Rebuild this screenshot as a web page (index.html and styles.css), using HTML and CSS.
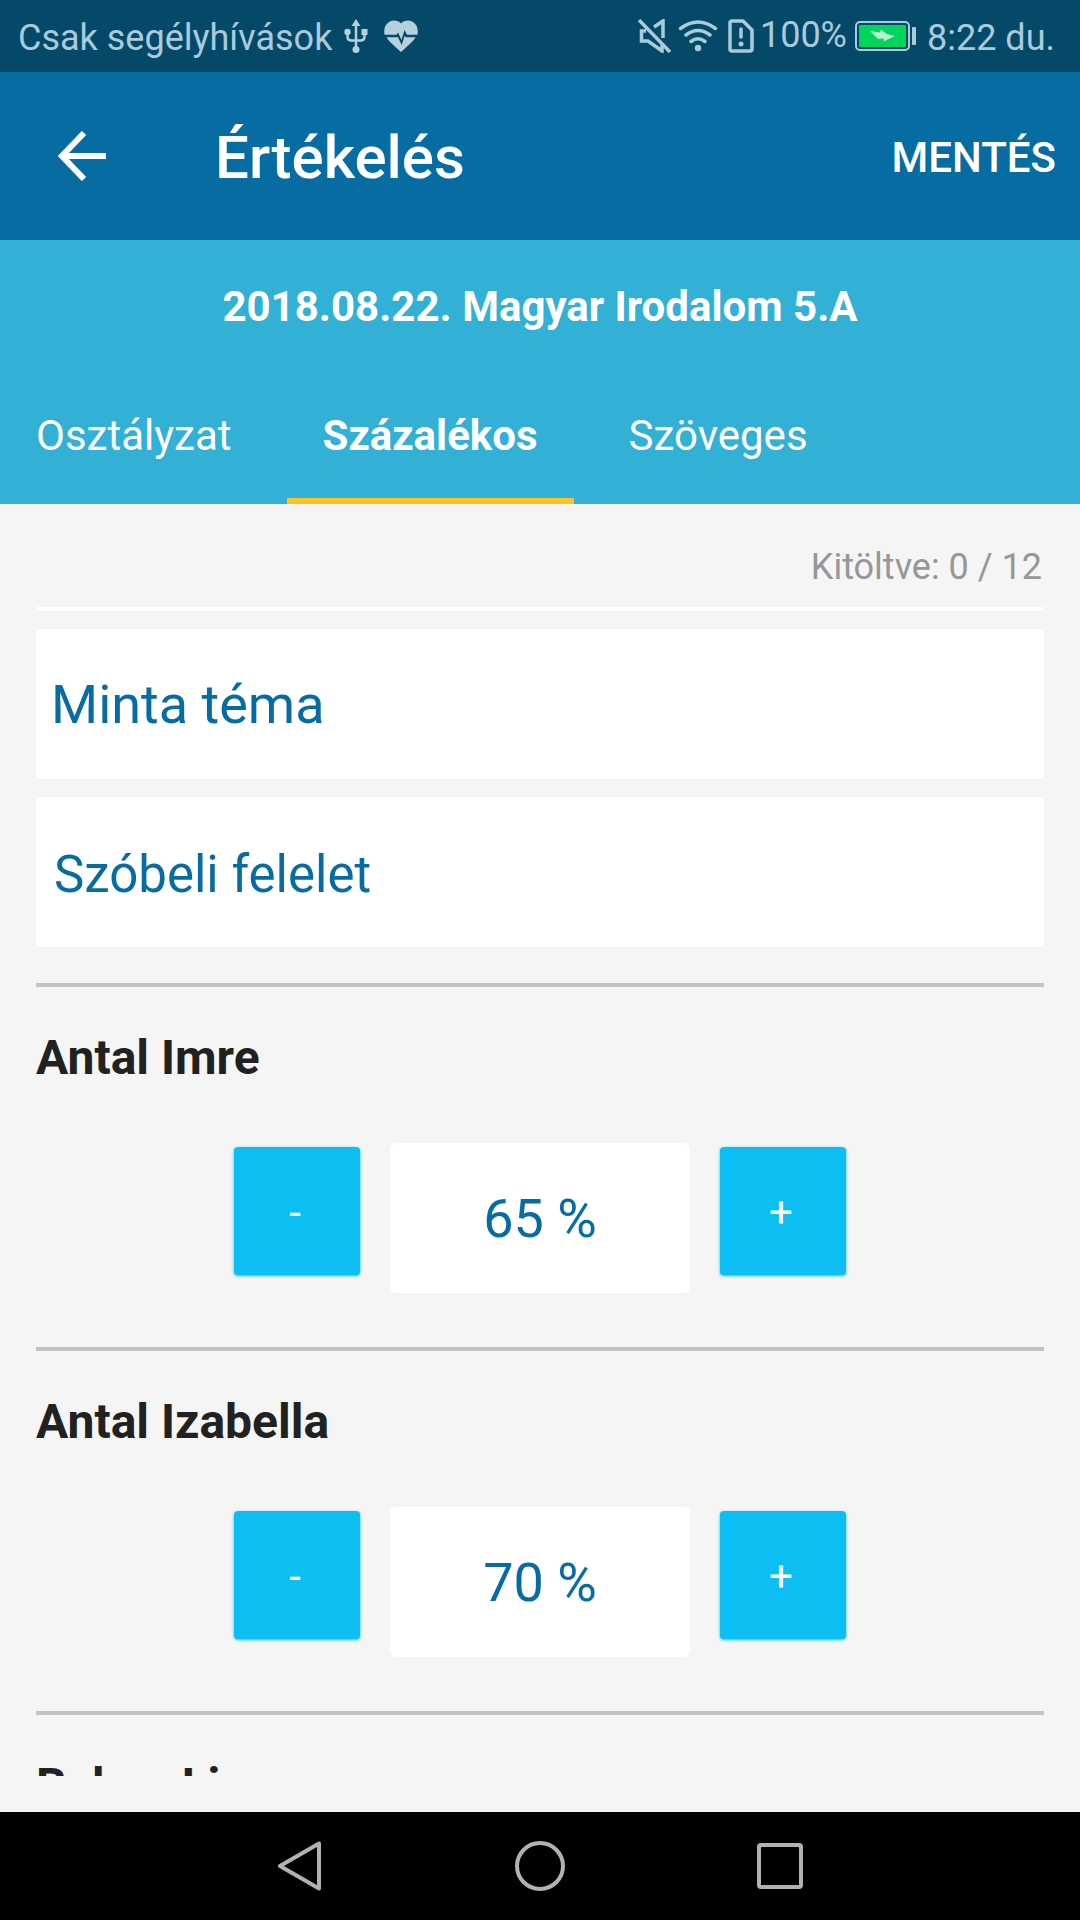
FILE: index.html
```html
<!DOCTYPE html>
<html lang="hu">
<head>
<meta charset="utf-8">
<meta name="viewport" content="width=device-width, initial-scale=1">
<title>Értékelés</title>
<link rel="stylesheet" href="styles.css">
</head>
<body>
<div class="app">
  <div class="status">
    <div class="status-left">
      <span class="carrier">Csak segélyhívások</span>
      <svg class="usb" width="24" height="34" viewBox="0 0 24 34" aria-hidden="true">
        <path d="M12 0l4.500 7h-9z" fill="currentColor"/>
        <path d="M12 5v24M3.500 13v4.500q0 4 4 4h9q4 0 4-4V13" fill="none" stroke="currentColor" stroke-width="2.500"/>
        <circle cx="3.500" cy="13" r="3.200" fill="currentColor"/>
        <rect x="17.500" y="10" width="6" height="6" fill="currentColor"/>
        <circle cx="12" cy="30.500" r="3.500" fill="currentColor"/>
      </svg>
      <svg class="heart" width="34" height="32" viewBox="0 0 34 32" aria-hidden="true">
        <path d="M17 3.500C14 0 9 0 5.500 1.700 1 4 -0.500 9 0.500 14.800H12.500l1.500-2.300 3.500 7.500L20.500 10l2.500 4.800h10.500C34.500 9 33 4 28.500 1.700 25 0 20 0 17 3.500z" fill="currentColor"/>
        <path d="M2.500 17.300C5 22 11 26.500 17 32c6-5.500 12-10 14.500-14.700H21.700l-1-1.800-3 9.500-3.900-8-.6.300z" fill="currentColor"/>
      </svg>
    </div>
    <div class="status-right">
      <svg width="34" height="34" viewBox="0 0 34 34" fill="none" stroke="currentColor" stroke-width="3.500" aria-hidden="true">
        <path d="M1 1l31 32M16 8l9-6v17M8 12H3.500v10H10l14 10V25"/>
      </svg>
      <svg class="wifi" width="40" height="32" viewBox="0 0 40 32" fill="none" stroke="currentColor" stroke-width="3.500" stroke-linecap="round" aria-hidden="true">
        <path d="M2.500 8.500q17.500-13 35 0M8 15q12-9 24 0M13 21.500q7-5.500 14 0"/>
        <circle cx="20" cy="28" r="3.200" fill="currentColor" stroke="none"/>
      </svg>
      <svg class="sim" width="26" height="34" viewBox="0 0 26 34" fill="none" stroke="currentColor" stroke-width="3.500" stroke-linejoin="round" aria-hidden="true">
        <path d="M4 2h11l9 9v19q0 2-2 2H4q-2 0-2-2V4q0-2 2-2z"/>
        <path d="M13 10v8" stroke-linecap="round"/>
        <circle cx="13" cy="25" r="2.500" fill="currentColor" stroke="none"/>
      </svg>
      <span class="charge">100%</span>
      <svg class="battery" width="62" height="30" viewBox="0 0 62 30" aria-hidden="true">
        <rect x="1" y="1" width="53" height="28" rx="4" fill="none" stroke="currentColor" stroke-width="2"/>
        <rect x="4" y="4" width="47" height="22" rx="1" fill="#00d45a"/>
        <path d="M15 10l10 1.500 1-3 6 4.500 8 2-11.500 5.500.5-3-6 .5z" fill="#b4f3cd"/>
        <rect x="57" y="6" width="4" height="18" rx="1" fill="currentColor"/>
      </svg>
      <span class="clock">8:22 du.</span>
    </div>
  </div>

  <header class="appbar">
    <button class="back" type="button" aria-label="Vissza">
      <svg width="50" height="50" viewBox="0 0 50 50" fill="none" stroke="currentColor" stroke-width="6" aria-hidden="true">
        <path d="M26 2L4 25 26 48M4 25h44"/>
      </svg>
    </button>
    <h1 class="title">Értékelés</h1>
    <button class="save" type="button">MENTÉS</button>
  </header>

  <section class="lesson">
    <h2 class="lesson-name">2018.08.22. Magyar Irodalom 5.A</h2>
    <nav class="tabs">
      <a class="tab" href="#osztalyzat">Osztályzat</a>
      <a class="tab tab-active" href="#szazalekos" aria-current="page">Százalékos</a>
      <a class="tab" href="#szoveges">Szöveges</a>
    </nav>
  </section>

  <main class="main">
    <p class="counter">Kitöltve: 0 / 12</p>
    <div class="scroller">
      <form class="form">
        <div class="fields">
          <input class="field" type="text" aria-label="Dátum">
          <input class="field" type="text" aria-label="Téma" value="Minta téma">
          <select class="field field-select" aria-label="Értékelés módja"><option>Szóbeli felelet</option></select>
        </div>
        <section class="student">
          <h3 class="student-name"><label for="s1">Antal Imre</label></h3>
          <div class="stepper">
            <button class="step" type="button" aria-label="Csökkentés">-</button>
            <input class="percent" id="s1" type="text" value="65 %">
            <button class="step" type="button" aria-label="Növelés">+</button>
          </div>
        </section>
        <section class="student">
          <h3 class="student-name"><label for="s2">Antal Izabella</label></h3>
          <div class="stepper">
            <button class="step" type="button" aria-label="Csökkentés">-</button>
            <input class="percent" id="s2" type="text" value="70 %">
            <button class="step" type="button" aria-label="Növelés">+</button>
          </div>
        </section>
        <section class="student">
          <h3 class="student-name">Bakos Lia</h3>
        </section>
      </form>
    </div>
  </main>

  <nav class="sysnav">
    <button type="button" aria-label="Vissza">
      <svg width="50" height="50" viewBox="0 0 50 50" fill="none" stroke="currentColor" stroke-width="4" stroke-linejoin="round" aria-hidden="true"><path d="M44 2.500v45L5 25z"/></svg>
    </button>
    <button type="button" aria-label="Kezdőképernyő">
      <svg width="50" height="50" viewBox="0 0 50 50" fill="none" stroke="currentColor" stroke-width="4" aria-hidden="true"><circle cx="25" cy="25" r="23"/></svg>
    </button>
    <button type="button" aria-label="Legutóbbiak">
      <svg width="50" height="50" viewBox="0 0 50 50" fill="none" stroke="currentColor" stroke-width="4" aria-hidden="true"><rect x="4" y="4" width="42" height="42" rx="2"/></svg>
    </button>
  </nav>
</div>
</body>
</html>
```
FILE: styles.css
```css
* {
  box-sizing: border-box;
}

body,
h1,
h2,
h3,
p {
  margin: 0;
}

body,
button,
input,
select {
  font-family: Roboto, sans-serif;
}

button {
  padding: 0;
  border: 0;
  background: none;
  color: inherit;
}

svg {
  display: block;
  flex: none;
}

.app {
  display: flex;
  flex-direction: column;
  height: 100vh;
  background: #f5f5f5;
  color: #212121;
}

/* System status bar */
.status {
  display: flex;
  justify-content: space-between;
  height: 72px;
  padding: 0 25px 0 18px;
  background: #044968;
  color: #abcadc;
  font-size: 36px;
  line-height: 48px;
}

.status-left,
.status-right {
  display: flex;
  align-items: center;
}

.carrier {
  padding-top: 4px;
}

.usb,
.heart {
  color: #b8d0dc;
}

.usb {
  margin-left: 12px;
}

.heart {
  margin-left: 16px;
}

.wifi {
  margin-left: 6px;
}

.sim {
  margin-left: 10px;
}

.charge {
  padding: 0 8px 2px 6px;
}

.clock {
  padding: 4px 0 0 10px;
}

/* App bar */
.appbar {
  display: flex;
  align-items: center;
  height: 168px;
  padding: 4px 24px 0 58px;
  background: #076ca1;
  color: #fff;
}

.back {
  margin-bottom: 4px;
}

.title {
  flex: 1;
  margin-left: 107px;
  font-size: 60px;
  font-weight: 500;
  line-height: 72px;
}

.save {
  font-size: 42px;
  font-weight: 500;
  line-height: 48px;
}

/* Lesson heading and tabs */
.lesson {
  padding-top: 43px;
  background: #33b0d5;
  color: #fff;
  font-size: 42px;
  line-height: 48px;
}

.lesson-name {
  margin-bottom: 38px;
  font-size: 42px;
  text-align: center;
}

.tabs {
  display: flex;
  gap: 19px;
}

.tab {
  padding: 43px 36px 38px;
  border-bottom: 6px solid transparent;
  color: inherit;
  text-decoration: none;
}

.tab-active {
  border-color: #ffc222;
  font-weight: 700;
}

/* Scrolling form */
.main {
  display: flex;
  flex: 1;
  flex-direction: column;
  min-height: 0;
  padding: 42px 36px 36px;
}

.counter {
  padding: 0 2px 19px 0;
  color: #979797;
  font-size: 36px;
  line-height: 42px;
  text-align: right;
}

.scroller {
  flex: 1;
  min-height: 0;
  overflow: hidden;
}

/* The list is scrolled so that only the foot of the first field shows */
.form {
  margin-top: -146px;
}

.fields {
  display: grid;
  gap: 18px;
  padding-bottom: 36px;
}

.field,
.percent {
  width: 100%;
  height: 150px;
  padding: 0 15px;
  border: 0;
  border-radius: 6px;
  background: #fff;
  color: #076ca1;
  font-size: 54px;
}

.field-select {
  padding: 4px 18px 0;
  appearance: none;
  font-size: 51px;
}

.student {
  padding: 43px 0 54px;
  border-top: 4px solid #c2c2c2;
}

.student-name {
  margin-bottom: 57px;
  font-size: 48px;
  line-height: 56px;
}

.stepper {
  display: flex;
  align-items: flex-start;
  justify-content: center;
  gap: 30px;
}

.percent {
  width: 300px;
  text-align: center;
}

.step {
  width: 126px;
  height: 128px;
  margin-top: 4px;
  padding: 2px 4px 0 0;
  border-radius: 4px;
  background: #0cbef1;
  box-shadow: 0 1px 3px #0cbef1;
  color: #fff;
  font-size: 42px;
}

/* System navigation */
.sysnav {
  display: flex;
  align-items: center;
  justify-content: center;
  gap: 190px;
  height: 108px;
  background: #000;
  color: #b2b2b2;
}
```
